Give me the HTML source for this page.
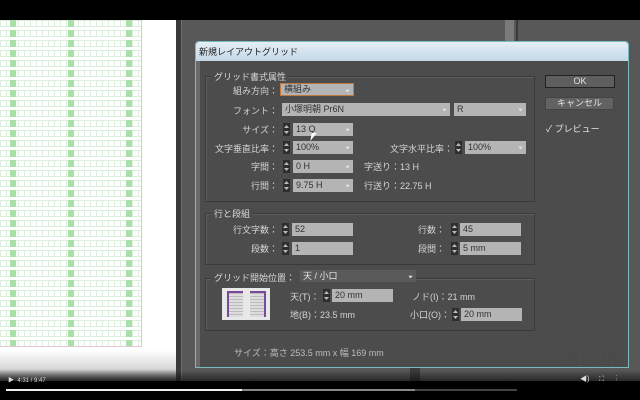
<!DOCTYPE html>
<html><head><meta charset="utf-8"><style>
*{margin:0;padding:0;box-sizing:border-box}
body{width:640px;height:400px;overflow:hidden;background:#000;position:relative;font-family:"Liberation Sans","Noto Sans CJK JP",sans-serif;font-size:9px;color:#d8d8d8}
.a{position:absolute}
.page{left:0;top:20px;width:176px;height:361px;background:#fff}
.grid{left:0;top:20px;width:142px;height:327px;
background:
repeating-linear-gradient(to bottom,transparent 0 7px,#fff 7px 10px),
repeating-linear-gradient(to right,transparent 0 10px,#a8e0a8 10px 16px,transparent 16px 58px),
repeating-linear-gradient(to bottom,#dcefdc 0 1px,transparent 1px 6px,#dcefdc 6px 7px,transparent 7px 10px),
repeating-linear-gradient(to right,#dcefdc 0 1px,transparent 1px 6px);border-right:1px solid #c8c8f0;border-bottom:1px solid #e8c8d8}
.lab{position:absolute;white-space:nowrap;color:#d4d4d4}
.r{text-align:right}
.f{position:absolute;background:#b4b4b4;color:#333;height:13px;line-height:13px;padding-left:3px;white-space:nowrap}
.dd::after{content:"";position:absolute;right:2px;top:3px;width:7px;height:7px;background:#e8e8e8;clip-path:polygon(20% 40%,80% 40%,50% 75%)}
.dd{padding-right:10px}
.sp{position:absolute;width:7px;height:13px;background:#2e2e2e}
.sp::before{content:"";position:absolute;left:1px;top:2px;width:5px;height:3px;background:#bbb;clip-path:polygon(50% 0,100% 100%,0 100%)}
.sp::after{content:"";position:absolute;left:1px;bottom:2px;width:5px;height:3px;background:#bbb;clip-path:polygon(0 0,100% 0,50% 100%)}
.box{position:absolute;border:1px solid #3a3a3a;box-shadow:1px 1px 0 #5e5e5e inset}
.gl{position:absolute;background:#4c4c4c;padding:0 3px;white-space:nowrap}
.btn{position:absolute;background:#5c5c5c;border:1px solid #2c2c2c;color:#e4e4e4;text-align:center;height:13px;line-height:11px}
</style></head><body>
<div class="a" style="left:0;top:0;width:640px;height:20px;background:#000"></div>
<div class="a page"></div>
<div class="a grid"></div>
<div class="a" style="left:0;top:350px;width:176px;height:31px;background:linear-gradient(#fff,#d8d8d8 60%,#555)"></div>
<div class="a" style="left:176px;top:20px;width:464px;height:361px;background:#585858"></div>
<div class="a" style="left:176px;top:20px;width:5px;height:361px;background:#3a3a3a"></div>
<div class="a" style="left:181px;top:20px;width:1px;height:361px;background:#b05070"></div>
<div class="a" style="left:505px;top:20px;width:9px;height:23px;background:#7a7a7a"></div>
<div class="a" style="left:516px;top:20px;width:2px;height:23px;background:#3a3a3a"></div>
<div class="a" style="left:410px;top:368px;width:10px;height:13px;background:#3c3c3c"></div>
<!-- dialog -->
<div class="a" style="left:195px;top:41px;width:434px;height:327px;background:#4c4c4c;border:1px solid #7ab8c0;border-radius:4px 4px 0 0"></div>
<div class="a" style="left:196px;top:42px;width:432px;height:19px;background:linear-gradient(#e4eef6,#c4d8e8);border-radius:3px 3px 0 0;color:#222;padding:3px 0 0 3px;font-size:9px">新規レイアウトグリッド</div>
<div class="a" style="left:196px;top:61px;width:4px;height:306px;background:#6a6a6a"></div>

<div class="box" style="left:205px;top:76px;width:330px;height:126px"></div>
<div class="gl" style="left:211px;top:70px">グリッド書式属性</div>
<div class="lab r" style="left:200px;width:78px;top:84px">組み方向：</div>
<div class="f dd" style="left:280px;top:83px;width:74px;border:1px solid #c07a40;line-height:11px">横組み</div>
<div class="lab r" style="left:200px;width:78px;top:104px">フォント：</div>
<div class="f dd" style="left:282px;top:103px;width:168px">小塚明朝 Pr6N</div>
<div class="f dd" style="left:454px;top:103px;width:72px">R</div>
<div class="lab r" style="left:200px;width:78px;top:123px">サイズ：</div>
<div class="sp" style="left:283px;top:123px"></div><div class="f dd" style="left:293px;top:123px;width:60px">13 Q</div>
<div class="lab r" style="left:200px;width:78px;top:142px">文字垂直比率：</div>
<div class="sp" style="left:283px;top:141px"></div><div class="f dd" style="left:293px;top:141px;width:60px">100%</div>
<div class="lab r" style="left:360px;width:93px;top:142px">文字水平比率：</div>
<div class="sp" style="left:455px;top:141px"></div><div class="f dd" style="left:465px;top:141px;width:61px">100%</div>
<div class="lab r" style="left:200px;width:78px;top:160px">字間：</div>
<div class="sp" style="left:283px;top:160px"></div><div class="f dd" style="left:293px;top:160px;width:60px">0 H</div>
<div class="lab" style="left:364px;top:160px">字送り：13 H</div>
<div class="lab r" style="left:200px;width:78px;top:179px">行間：</div>
<div class="sp" style="left:283px;top:179px"></div><div class="f dd" style="left:293px;top:179px;width:60px">9.75 H</div>
<div class="lab" style="left:364px;top:179px">行送り：22.75 H</div>
<div class="a" style="left:311px;top:133px;width:0;height:0;border-left:5px solid #fff;border-bottom:8px solid transparent;transform:skewX(-10deg)"></div>

<div class="box" style="left:205px;top:213px;width:330px;height:52px"></div>
<div class="gl" style="left:211px;top:207px">行と段組</div>
<div class="lab r" style="left:200px;width:78px;top:223px">行文字数：</div>
<div class="sp" style="left:282px;top:223px"></div><div class="f" style="left:292px;top:223px;width:61px">52</div>
<div class="lab r" style="left:380px;width:65px;top:223px">行数：</div>
<div class="sp" style="left:451px;top:223px"></div><div class="f" style="left:460px;top:223px;width:61px">45</div>
<div class="lab r" style="left:200px;width:78px;top:242px">段数：</div>
<div class="sp" style="left:282px;top:242px"></div><div class="f" style="left:292px;top:242px;width:61px">1</div>
<div class="lab r" style="left:380px;width:65px;top:242px">段間：</div>
<div class="sp" style="left:451px;top:242px"></div><div class="f" style="left:460px;top:242px;width:61px">5 mm</div>

<div class="box" style="left:205px;top:278px;width:330px;height:53px"></div>
<div class="gl" style="left:211px;top:271px;background:#4c4c4c;width:90px">グリッド開始位置：</div>
<div class="f dd" style="left:300px;top:270px;width:116px;background:#5a5a5a;color:#e4e4e4;height:12px;line-height:12px">天 / 小口</div>
<div class="a" style="left:222px;top:288px;width:48px;height:32px;background:#e8e8e8"></div>
<div class="a" style="left:227px;top:291px;width:16px;height:26px;background:repeating-linear-gradient(to bottom,#bbb 0 1px,transparent 1px 3px),#ddd;border-top:2px solid #7a4a9a;border-left:2px solid #7a4a9a;border-right:none"></div>
<div class="a" style="left:250px;top:291px;width:16px;height:26px;background:repeating-linear-gradient(to bottom,#bbb 0 1px,transparent 1px 3px),#ddd;border-top:2px solid #7a4a9a;border-right:2px solid #7a4a9a"></div>
<div class="lab" style="left:290px;top:290px">天(T)：</div>
<div class="sp" style="left:323px;top:289px"></div><div class="f" style="left:332px;top:289px;width:61px">20 mm</div>
<div class="lab" style="left:412px;top:290px">ノド(I)：21 mm</div>
<div class="lab" style="left:290px;top:308px">地(B)：23.5 mm</div>
<div class="lab" style="left:410px;top:308px">小口(O)：</div>
<div class="sp" style="left:452px;top:308px"></div><div class="f" style="left:461px;top:308px;width:61px">20 mm</div>

<div class="lab" style="left:234px;top:346px;color:#bdbdbd">サイズ：高さ 253.5 mm x 幅 169 mm</div>

<div class="btn" style="left:545px;top:75px;width:70px;background:#5e5e5e;border-color:#222">OK</div>
<div class="btn" style="left:545px;top:97px;width:69px;background:#626262;border-color:#444">キャンセル</div>
<div class="lab" style="left:546px;top:122px;color:#e4e4e4">✓ プレビュー</div>

<div class="a" style="left:566px;top:348px;font-style:italic;font-weight:bold;font-size:20px;color:#4a4a4a">Aroin</div>
<!-- bottom bar -->
<div class="a" style="left:0;top:370px;width:640px;height:12px;background:linear-gradient(transparent,rgba(0,0,0,.6))"></div>
<div class="a" style="left:0;top:381px;width:640px;height:19px;background:#000"></div>
<div class="a" style="left:8px;top:375px;font-size:6px;color:#ddd">▶&nbsp; 4:31 / 9:47</div>
<div class="a" style="left:580px;top:374px;font-size:7px;color:#ddd">◀)&nbsp;&nbsp;&nbsp;&nbsp;&nbsp;⛶&nbsp;&nbsp;&nbsp;&nbsp;&nbsp;&nbsp;⋮</div>
<div class="a" style="left:6px;top:389px;width:511px;height:2px;background:#444"></div>
<div class="a" style="left:6px;top:389px;width:409px;height:2px;background:#888"></div>
<div class="a" style="left:6px;top:389px;width:236px;height:2px;background:#eee"></div>
</body></html>
